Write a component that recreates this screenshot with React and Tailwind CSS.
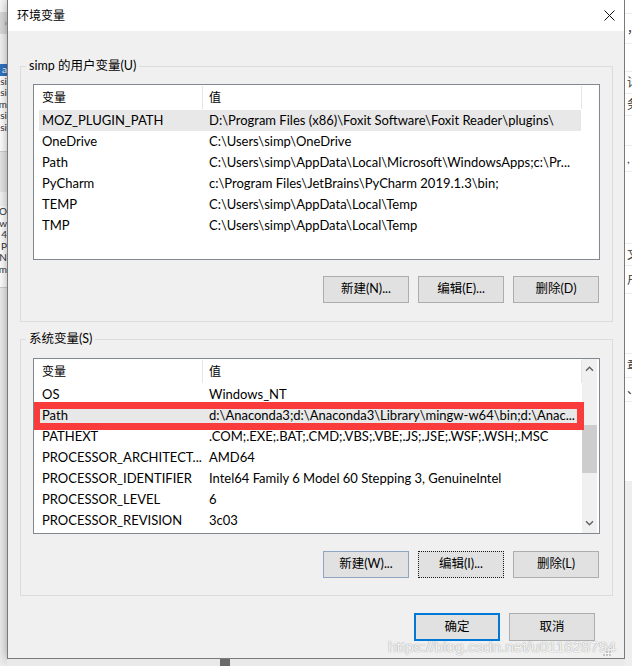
// 环境变量 dialog — Windows 10 style, recreated with flow layout.

const USER_VARS = [
  ['MOZ_PLUGIN_PATH', 'D:\\Program Files (x86)\\Foxit Software\\Foxit Reader\\plugins\\'],
  ['OneDrive', 'C:\\Users\\simp\\OneDrive'],
  ['Path', 'C:\\Users\\simp\\AppData\\Local\\Microsoft\\WindowsApps;c:\\Pr...'],
  ['PyCharm', 'c:\\Program Files\\JetBrains\\PyCharm 2019.1.3\\bin;'],
  ['TEMP', 'C:\\Users\\simp\\AppData\\Local\\Temp'],
  ['TMP', 'C:\\Users\\simp\\AppData\\Local\\Temp'],
]

const SYS_VARS = [
  ['OS', 'Windows_NT'],
  ['Path', 'd:\\Anaconda3;d:\\Anaconda3\\Library\\mingw-w64\\bin;d:\\Anac...'],
  ['PATHEXT', '.COM;.EXE;.BAT;.CMD;.VBS;.VBE;.JS;.JSE;.WSF;.WSH;.MSC'],
  ['PROCESSOR_ARCHITECT...', 'AMD64'],
  ['PROCESSOR_IDENTIFIER', 'Intel64 Family 6 Model 60 Stepping 3, GenuineIntel'],
  ['PROCESSOR_LEVEL', '6'],
  ['PROCESSOR_REVISION', '3c03'],
]

const BTN_TONE = {
  normal: 'border border-[#adadad]',
  hover: 'border border-[#8ea6c2]',
  focus: 'border border-dotted border-[#1a1a1a]',
  primary: 'border-2 border-[#0078d7]',
}

function Btn({ children, tone = 'normal', tall = false }) {
  return (
    <button
      className={`flex w-[86px] items-center justify-center bg-[#e1e1e1] text-[12.5px] leading-none text-black ${tall ? 'h-[28px]' : 'h-[27px]'} ${BTN_TONE[tone]}`}
    >
      {children}
    </button>
  )
}

function Chevron({ down = false }) {
  return (
    <svg width="9" height="6" viewBox="0 0 9 6" className="block">
      <path
        d={down ? 'M1 1.2 L4.5 4.7 L8 1.2' : 'M1 4.8 L4.5 1.3 L8 4.8'}
        fill="none"
        stroke="#606060"
        strokeWidth="1.4"
      />
    </svg>
  )
}

function Scrollbar() {
  return (
    <div className="flex w-[15px] flex-col items-center bg-[#f0f0f0]">
      <div className="flex h-[20px] items-center"><Chevron /></div>
      <div className="mt-[46px] h-[48px] w-[15px] bg-[#cdcdcd]" />
      <div className="mt-auto flex h-[20px] items-center"><Chevron down /></div>
    </div>
  )
}

// ListView: 变量 / 值 columns, optional selected row with red marker box
function VarList({ rows, selected, scrollbar, marked }) {
  return (
    <div className="flex h-[176px] overflow-hidden border border-[#828790] bg-white">
      <div className="flex w-[548px] shrink-0 flex-col">
        <div className="flex h-[25px] shrink-0 text-[12px]">
          <div className="flex w-[168px] items-center pl-[8px]">变量</div>
          <div className="my-[1px] w-px bg-[#e5e5e5]" />
          <div className="flex w-[378px] items-center pl-[6px]">值</div>
          <div className="my-[1px] w-px bg-[#e5e5e5]" />
        </div>
        {rows.map(([name, value], i) => (
          <div
            key={name}
            className={`relative ml-[5px] mr-[1px] flex h-[21px] shrink-0 items-center pt-[1px] text-[13px] ${i === selected ? 'bg-[#e8e8e8]' : ''}`}
          >
            <div className="w-[164px] shrink-0 overflow-hidden whitespace-nowrap pl-[3px]">{name}</div>
            <div className="min-w-0 flex-1 overflow-hidden whitespace-nowrap pl-[6px]">{value}</div>
            {marked && i === selected && (
              <span className="pointer-events-none absolute left-[-5px] top-[-3px] h-[28px] w-[550px] border-[7px] border-l-[6px] border-[#fa3b3b]" />
            )}
          </div>
        ))}
      </div>
      {scrollbar && <Scrollbar />}
    </div>
  )
}

function Group({ label, className = '', children }) {
  return (
    <fieldset className={`min-w-0 border border-[#dcdcdc] ${className}`}>
      <legend className="ml-[5px] px-[3px] text-[12.5px] leading-[16px]">{label}</legend>
      {children}
    </fieldset>
  )
}

function SizeGrip() {
  return (
    <svg width="9" height="9" viewBox="0 0 9 9" className="block">
      {[[7, 1], [4, 4], [7, 4], [1, 7], [4, 7], [7, 7]].map(([x, y]) => (
        <rect key={`${x}-${y}`} x={x} y={y} width="2" height="2" fill="#c4c4c4" />
      ))}
    </svg>
  )
}

function LeftBackdrop() {
  const a = ['si', 'si', 'am', 'si', 'si']
  const b = ['O', 'w', '4', 'P', 'N', 'm']
  return (
    <div className="flex w-[7px] shrink-0 flex-col overflow-hidden bg-[#f0f0f0] text-[10px] leading-[11.5px] text-[#333]">
      <div className="h-[12px] bg-[#f7f7f7]" />
      <div className="flex h-[22px] items-center justify-end bg-[#dadada] text-[#888]">›</div>
      <div className="h-[30px] bg-[#f3f3f3]" />
      <div className="flex justify-end bg-[#2f72c0] text-white">a</div>
      {a.map((t, i) => (
        <div key={i} className="flex justify-end bg-white">{t}</div>
      ))}
      <div className="h-[18px] bg-white" />
      <div className="h-px bg-[#cfcfcf]" />
      <div className="h-[40px] bg-[#e6e6e6]" />
      <div className="h-[14px] bg-[#f5f5f5]" />
      {b.map((t, i) => (
        <div key={i} className="flex justify-end bg-white">{t}</div>
      ))}
      <div className="h-[12px] bg-white" />
      <div className="h-px bg-[#cfcfcf]" />
      <div className="flex-1 bg-[#ececec]" />
    </div>
  )
}

function RightBackdrop() {
  const rows = [
    ['h-[14px]', ''], ['h-[30px]', '，'], ['h-[28px]', ''], ['h-[22px]', '详'], ['h-[22px]', '务'],
    ['h-[30px]', ''], ['h-[26px]', ','], ['h-[72px]', ''], ['h-[22px]', '文'], ['h-[28px]', '户'],
    ['h-[60px]', ''], ['h-[24px]', '章'], ['h-[24px]', '、'], ['h-[80px]', ''],
  ]
  return (
    <div className="flex flex-1 flex-col overflow-hidden bg-white text-[12px] text-[#333]">
      {rows.map(([h, t], i) => (
        <div key={i} className={`${h} flex items-center border-b border-[#ececec] pl-[2px]`}>{t}</div>
      ))}
      <div className="flex-1 bg-[#eeeeee]" />
    </div>
  )
}

export default function App() {
  return (
    <div className="relative flex h-[666px] w-[632px] overflow-hidden bg-[#efefef] font-['Segoe_UI','Lato','Noto_Sans_CJK_SC',sans-serif] text-[12px] text-black">
      <LeftBackdrop />

      <div className="flex w-[618px] shrink-0 flex-col">
        <div className="flex h-[659px] flex-col border-x border-b border-[#7a7a7a] bg-[#f0f0f0] shadow-[0_0_10px_rgba(0,0,0,0.35)]">
          {/* title bar */}
          <div className="flex h-[31px] shrink-0 items-center justify-between bg-white pl-[9px] pr-[9px]">
            <span className="text-[12px] leading-none">环境变量</span>
            <svg width="11" height="11" viewBox="0 0 11 11" className="block">
              <path d="M0.5 0.5 L10.5 10.5 M10.5 0.5 L0.5 10.5" stroke="#111" strokeWidth="1" />
            </svg>
          </div>

          {/* body */}
          <div className="flex flex-1 flex-col pl-[12px] pr-[11px] pt-[27px]">
            <Group label="simp 的用户变量(U)">
              <div className="px-[12px] pb-[18px] pt-[10px]">
                <VarList rows={USER_VARS} selected={0} />
                <div className="mt-[16px] flex justify-end gap-[9px] pr-[1px]">
                  <Btn>新建(N)...</Btn>
                  <Btn>编辑(E)...</Btn>
                  <Btn>删除(D)</Btn>
                </div>
              </div>
            </Group>

            <Group label="系统变量(S)" className="mt-[9px]">
              <div className="px-[12px] pb-[17px] pt-[11px]">
                <VarList rows={SYS_VARS} selected={1} scrollbar marked />
                <div className="mt-[17px] flex justify-end gap-[9px] pr-[1px]">
                  <Btn tone="hover">新建(W)...</Btn>
                  <Btn tone="focus">编辑(I)...</Btn>
                  <Btn>删除(L)</Btn>
                </div>
              </div>
            </Group>

            <div className="mt-[17px] flex justify-end gap-[9px] pr-[18px]">
              <Btn tone="primary" tall>确定</Btn>
              <Btn tall>取消</Btn>
            </div>

            <div className="mt-auto flex justify-end pb-[2px] pr-[2px]">
              <SizeGrip />
            </div>
          </div>
        </div>
        <div className="flex flex-1 bg-[#e9e9e9] pl-[213px]">
          <div className="w-[10px] bg-[#6b6b6b]" />
        </div>
      </div>

      <RightBackdrop />

      {/* csdn watermark stamped over the screenshot */}
      <div className="pointer-events-none absolute left-[388px] top-[637px] whitespace-nowrap font-['Liberation_Sans',Arial,sans-serif] text-[15.5px] leading-[20px] text-[rgba(255,255,255,0.9)] [text-shadow:0_0_1px_rgba(120,120,120,0.55),0_0_1px_rgba(120,120,120,0.55)]">
        https://blog.csdn.net/u011628794
      </div>
    </div>
  )
}
